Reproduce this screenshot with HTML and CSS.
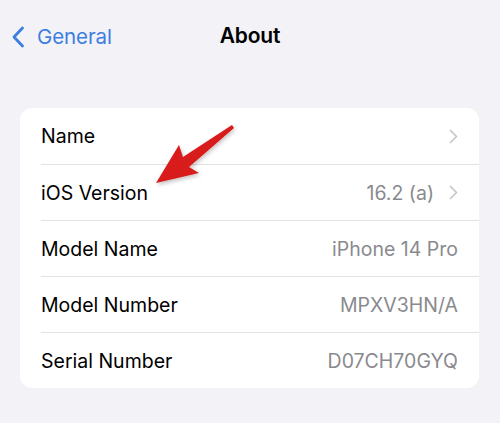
FILE: index.html
```html
<!DOCTYPE html>
<html>
<head>
<meta charset="utf-8">
<link rel="stylesheet" href="styles.css">
</head>
<body>
<div class="screen">
  <header class="nav">
    <div class="back">
      <svg class="back-chev" width="14" height="22" viewBox="0 0 14 22"><path d="M11.5 2 L3 11 L11.5 20" fill="none" stroke="#3d7ee0" stroke-width="2.8" stroke-linecap="round" stroke-linejoin="round"/></svg>
      <span class="back-label">General</span>
    </div>
    <div class="title">About</div>
  </header>
  <section class="card">
    <div class="row"><span class="label">Name</span><span class="right"><svg class="chev" width="9" height="15" viewBox="0 0 9 15"><path d="M1.5 1.5 L7.5 7.5 L1.5 13.5" fill="none" stroke="#c6c6ca" stroke-width="1.7" stroke-linecap="round" stroke-linejoin="round"/></svg></span></div>
    <div class="row"><span class="label">iOS Version</span><span class="right"><span class="value">16.2 (a)</span><svg class="chev" width="9" height="15" viewBox="0 0 9 15"><path d="M1.5 1.5 L7.5 7.5 L1.5 13.5" fill="none" stroke="#c6c6ca" stroke-width="1.7" stroke-linecap="round" stroke-linejoin="round"/></svg></span></div>
    <div class="row"><span class="label">Model Name</span><span class="right"><span class="value">iPhone 14 Pro</span></span></div>
    <div class="row"><span class="label">Model Number</span><span class="right"><span class="value">MPXV3HN/A</span></span></div>
    <div class="row"><span class="label">Serial Number</span><span class="right"><span class="value">D07CH70GYQ</span></span></div>
  </section>
  <svg class="arrow" width="500" height="423" viewBox="0 0 500 423">
    <defs>
      <filter id="sh" x="-20%" y="-20%" width="140%" height="140%">
        <feDropShadow dx="1" dy="2" stdDeviation="2" flood-color="#000" flood-opacity="0.25"/>
      </filter>
    </defs>
    <polygon points="156,183 179,145 183,157 232,125 234,128 189,167 199,173" fill="#d81a1a" filter="url(#sh)"/>
  </svg>
</div>
</body>
</html>
```
FILE: styles.css
```css
html, body {
  margin: 0;
  padding: 0;
}
body {
  background: #f2f2f7;
  font-family: Inter, "Liberation Sans", sans-serif;
  width: 500px;
  height: 423px;
  overflow: hidden;
}
.screen {
  position: relative;
  width: 500px;
  height: 423px;
}
.nav {
  position: relative;
  height: 70px;
  display: flex;
  align-items: center;
  justify-content: center;
}
.back {
  position: absolute;
  left: 11px;
  top: 24px;
  display: flex;
  align-items: center;
  gap: 12px;
}
.back-chev {
  display: block;
}
.back-label {
  color: #3d7ee0;
  font-size: 20.5px;
  letter-spacing: -0.1px;
}
.title {
  font-size: 21px;
  font-weight: 600;
  color: #000;
  letter-spacing: -0.2px;
}
.card {
  margin: 38px 21px 0 20px;
  background: #fff;
  border-radius: 12px;
  overflow: hidden;
}
.row {
  height: 56px;
  margin-left: 21px;
  padding-right: 21px;
  display: flex;
  align-items: center;
  justify-content: space-between;
  box-sizing: border-box;
}
.row + .row {
  border-top: 1px solid #e2e2e6;
}
.label {
  font-size: 19.5px;
  color: #000;
}
.right {
  display: flex;
  align-items: center;
  gap: 15px;
}
.value {
  font-size: 19.5px;
  color: #8a8a8e;
}
.chev {
  display: block;
}
.arrow {
  position: absolute;
  left: 0;
  top: 0;
  pointer-events: none;
}
```
